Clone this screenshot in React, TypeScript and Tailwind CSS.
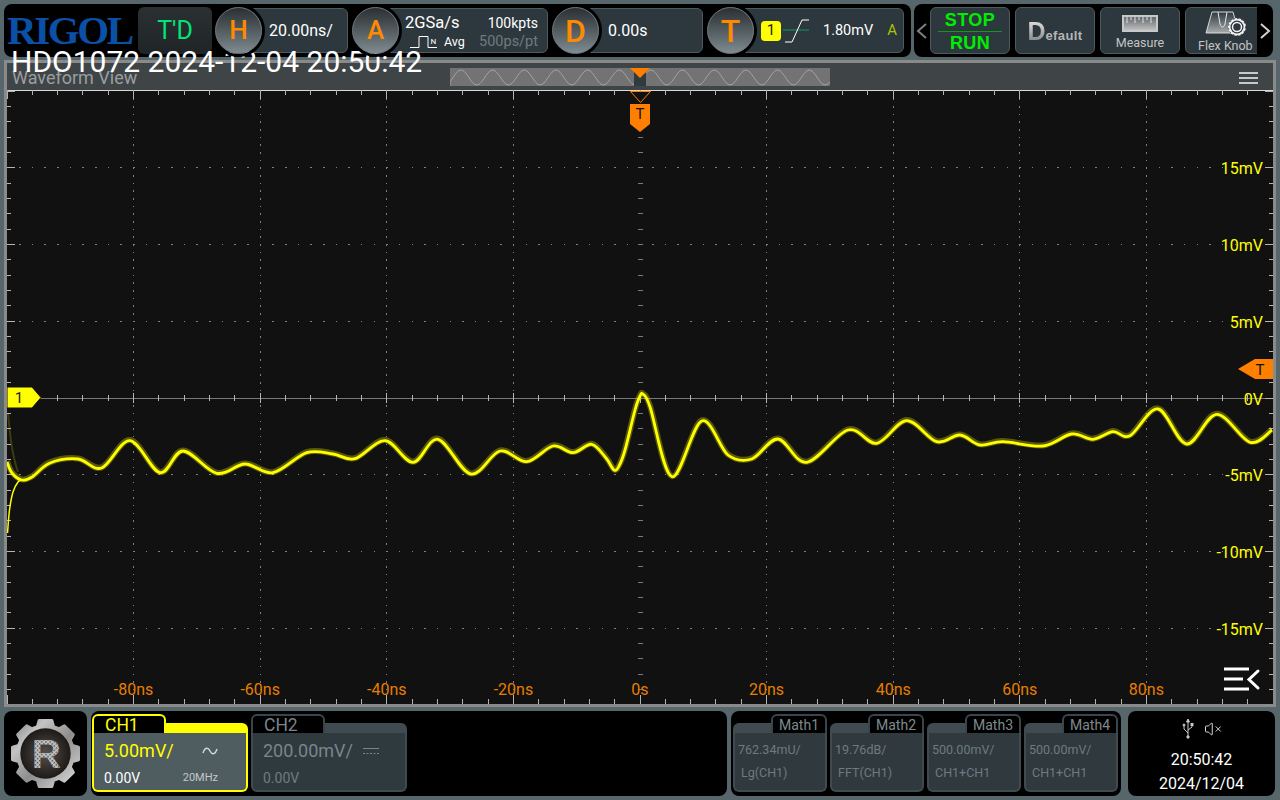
import React from 'react';
import { VolumeX } from 'lucide-react';

// trace points read off the screen, in page pixels
const trace: [number, number][] = [
  [7, 462], [12, 473], [21.7, 480], [32, 477], [50, 463], [78, 459], [101.7, 468], [130, 440.7], [160, 472.7], [183, 451],
  [216.7, 473.3], [245, 464], [273, 472.7], [306.7, 452.7], [333, 454], [355, 458.7], [385, 440.7], [413, 462.3],
  [438, 439.3], [470.7, 474], [500, 451], [526.7, 461.7], [553, 446], [573, 452.7], [591.7, 444.3], [606, 458], [614, 470],
  [619, 466], [625, 450], [635, 410], [640, 396], [643, 394.3], [650, 406.7], [672, 476.7], [701.7, 421], [728, 455],
  [751.7, 459], [778, 439], [806.7, 462.3], [848, 430], [876.7, 443.3], [906.7, 420.7], [936.7, 441.7], [960, 435],
  [980, 445], [1003, 441.7], [1043, 446], [1071.7, 434], [1093, 439.3], [1113, 431.7], [1130, 435.7], [1158, 409],
  [1186.7, 444], [1216.7, 414.3], [1250, 442.3], [1272, 430],
];
const riseTrace: [number, number][] = [[22, 480], [18, 482], [13, 492], [9.5, 510], [7.5, 533]];

const smooth = (pts: [number, number][]) => {
  let d = `M${pts[0][0]} ${pts[0][1]}`;
  for (let i = 0; i < pts.length - 1; i++) {
    const p0 = pts[Math.max(i - 1, 0)];
    const p1 = pts[i];
    const p2 = pts[i + 1];
    const p3 = pts[Math.min(i + 2, pts.length - 1)];
    d += `C${p1[0] + (p2[0] - p0[0]) / 6} ${p1[1] + (p2[1] - p0[1]) / 6} ${p2[0] - (p3[0] - p1[0]) / 6} ${p2[1] - (p3[1] - p1[1]) / 6} ${p2[0]} ${p2[1]}`;
  }
  return d;
};

const range = (from: number, to: number) => Array.from({ length: to - from + 1 }, (_, i) => from + i);

const CX = 640;
const CY = 398;
const DX = 126.6;
const DY = 76.7;

const timeLabels = [-80, -60, -40, -20, 0, 20, 40, 60, 80];
const voltLabels = [15, 10, 5, 0, -5, -10, -15];

const Plot = () => (
  <svg viewBox="7 90 1266 614" className="block h-[614px] w-[1266px] bg-[#111111]" fontFamily="Roboto, sans-serif">
    {/* dotted grid */}
    <g fill="#808080" shapeRendering="crispEdges">
      {[-4, -3, -2, -1, 1, 2, 3, 4].map((k) =>
        range(-40, 40).map((j) => (
          <rect key={`v${k}${j}`} x={CX + k * DX - 0.5} y={CY + (j * DY) / 10 - 0.5} width="1" height="1.5" />
        ))
      )}
      {[-3, -2, -1, 1, 2, 3].map((k) =>
        range(-50, 50).map((j) => (
          <rect key={`h${k}${j}`} x={CX + (j * DX) / 10 - 0.5} y={CY + k * DY - 0.5} width="1.5" height="1" />
        ))
      )}
    </g>
    {/* axes and edge ticks */}
    <g stroke="#b4b4b4" strokeWidth="1" shapeRendering="crispEdges">
      <line x1="7" x2="1273" y1="398" y2="398" stroke="#777777" />
      <line x1="7" x2="1273" y1="90.5" y2="90.5" stroke="#d8d8d8" />
      {range(-25, 25).map((i) => {
        const x = CX + (i * DX) / 5;
        const major = i % 5 === 0;
        return (
          <g key={i}>
            <line x1={x} x2={x} y1="90" y2={major ? 99 : 95} />
            <line x1={x} x2={x} y1={major ? 695 : 699} y2="704" />
            <line x1={x} x2={x} y1={major ? 393 : 395} y2={major ? 403 : 401} />
          </g>
        );
      })}
      {range(-20, 20).map((i) => {
        const y = CY + (i * DY) / 5;
        const major = i % 5 === 0;
        return (
          <g key={i}>
            <line x1="7" x2={major ? 15 : 11} y1={y} y2={y} />
            <line x1={major ? 1265 : 1269} x2="1273" y1={y} y2={y} />
            <line x1="637.5" x2="642.5" y1={y} y2={y} stroke="#7a7a7a" />
          </g>
        );
      })}
    </g>
    {/* trace with its persistence */}
    <path d={smooth(trace)} fill="none" stroke="#ffff00" strokeOpacity="0.3" strokeWidth="6" transform="translate(0 -0.6)" />
    <path d="M8 413C10 435 12 455 18 472" fill="none" stroke="#ffff00" strokeOpacity="0.18" strokeWidth="2" />
    <path d={smooth(riseTrace)} fill="none" stroke="#ffff00" strokeWidth="1.5" />
    <path d={smooth(trace)} fill="none" stroke="#ffff00" strokeWidth="2.8" />
    {/* axis labels */}
    <g fill="#e67e00" fontSize="16" textAnchor="middle">
      {timeLabels.map((t) => (
        <text key={t} x={CX + (t / 20) * DX} y="695">{t}{t === 0 ? 's' : 'ns'}</text>
      ))}
    </g>
    <g fill="#ffff00" fontSize="16" textAnchor="end">
      {voltLabels.map((v) => (
        <text key={v} x="1263" y={CY - (v / 5) * DY + 6.5}>{v}{v === 0 ? 'V' : 'mV'}</text>
      ))}
    </g>
    {/* trigger markers */}
    <path d="M630.5 91.5H650.5L640.5 102.5Z" fill="#111111" stroke="#ff8000" strokeWidth="1" />
    <path d="M630 104H650V124L640 132L630 124Z" fill="#ff8000" />
    <text x="640" y="119" fontSize="15" textAnchor="middle" fill="#111111">T</text>
    <path d="M1238 369L1255 359H1273V379H1255Z" fill="#ff8000" />
    <text x="1260" y="375" fontSize="15" textAnchor="middle" fill="#111111">T</text>
    {/* channel 1 ground marker */}
    <path d="M7 387H32L41 397.5L32 408H7Z" fill="#ffff00" stroke="#111111" strokeWidth="1" />
    <text x="19" y="403" fontSize="15" textAnchor="middle" fill="#222222">1</text>
    {/* touch menu */}
    <g stroke="#ffffff" strokeWidth="3" fill="none">
      <path d="M1224 669H1249M1224 679H1243M1224 689H1249" />
      <path d="M1258 671L1249 679.5L1258 688" strokeLinecap="round" />
    </g>
  </svg>
);

const Knob = ({ letter, className }: { letter: string; className: string }) => (
  <div className={`z-10 flex h-[47px] w-[47px] shrink-0 items-center justify-center rounded-full border border-[#6f7b80] bg-gradient-to-b from-[#2b3033] to-[#7f8c91] text-[#ff8a00] shadow-[0_0_0_3px_#000000] ${className}`}>
    {letter}
  </div>
);

const Readout = ({ className, children }: { className: string; children: React.ReactNode }) => (
  <div className={`-ml-[9px] h-[45px] rounded-r-md border border-[#4d5a60] bg-[#2d383e] text-white ${className}`}>
    {children}
  </div>
);

const MiniMap = () => {
  let d = 'M450 86';
  for (let x = 0; x <= 380; x += 2) {
    d += `L${450 + x} ${77.5 - 7.5 * Math.sin((x / 380) * 12 * 2 * Math.PI - 0.6)}`;
  }
  return (
    <svg viewBox="450 68 380 18" className="h-[18px] w-[380px] bg-[#737373]">
      <path d={d} fill="none" stroke="#a3a3a3" strokeWidth="1" />
      <rect x="634" y="72" width="12" height="14" fill="#2d3a40" />
      <path d="M630 68H650L640 78Z" fill="#ff8000" />
    </svg>
  );
};

const TopBar = () => (
  <div className="flex gap-[3px] pl-[4px]">
    <div className="flex h-[53px] w-[907px] items-center rounded-lg bg-black pl-[3px]">
      <div className="w-[131px] font-['Liberation_Serif',serif] text-[41px] leading-none font-bold tracking-[-2.4px] text-[#0a50a6]">
        RIGOL
      </div>
      <div className="flex h-[47px] w-[74px] items-center justify-center rounded-md bg-gradient-to-b from-[#2b3033] to-[#1f2426] text-[25px] text-[#00e676]">
        T'D
      </div>
      <div className="ml-[3px] flex w-[133px] items-center">
        <Knob letter="H" className="text-[26px] font-medium" />
        <Readout className="flex flex-1 items-center pl-[15px] text-[16px]">20.00ns/</Readout>
      </div>
      <div className="ml-[4px] flex w-[196px] items-center">
        <Knob letter="A" className="text-[26px] font-medium" />
        <Readout className="flex flex-1 flex-col justify-center pr-[9px] pl-[14px]">
          <div className="flex items-center justify-between pt-[3px] leading-[20px]">
            <span className="text-[16.5px]">2GSa/s</span>
            <span className="text-[14px]">100kpts</span>
          </div>
          <div className="flex items-center justify-between leading-[18px]">
            <span className="flex items-center text-[12.5px]">
              <svg width="39" height="14" viewBox="0 0 39 14" fill="none" stroke="#ffffff" strokeWidth="1">
                <path d="M5 12.5H14V1.5H23V12.5H32" />
                <text x="25.5" y="9" fontSize="8" fill="#ffffff" stroke="none" fontFamily="Roboto, sans-serif">N</text>
              </svg>
              <span>Avg</span>
            </span>
            <span className="text-[14.5px] text-[#6f7a80]">500ps/pt</span>
          </div>
        </Readout>
      </div>
      <div className="ml-[4px] flex w-[151px] items-center">
        <Knob letter="D" className="text-[32px] font-medium" />
        <Readout className="flex flex-1 items-center pl-[17px] text-[16px]">0.00s</Readout>
      </div>
      <div className="ml-[4px] flex w-[197px] items-center">
        <Knob letter="T" className="text-[32px] font-medium" />
        <Readout className="flex flex-1 items-center pr-[4px] pl-[15px]">
          <span className="flex h-[20px] w-[20px] items-center justify-center rounded-[4px] bg-[#ffff00] text-[15px] text-[#222222]">1</span>
          <svg width="28" height="28" viewBox="0 0 28 28" fill="none" className="ml-[2px]">
            <path d="M0 13H26" stroke="#0f9a5c" strokeWidth="1" />
            <path d="M2 25H9L19 3H26" stroke="#ffffff" strokeWidth="1" />
          </svg>
          <span className="ml-[12px] text-[14.5px]">1.80mV</span>
          <span className="ml-auto pr-[2px] text-[15px] text-[#a8c400]">A</span>
        </Readout>
      </div>
    </div>
    <div className="flex h-[53px] w-[359px] items-center rounded-lg bg-black">
      <svg width="16" height="20" viewBox="0 0 16 20" fill="none" stroke="#7b8084" strokeWidth="2" className="shrink-0">
        <path d="M12 3L4 10L12 17" />
      </svg>
      <div className="flex w-[327px] gap-[5px] overflow-hidden">
        <div className="flex h-[47px] w-[80px] shrink-0 flex-col items-center justify-center rounded-md border border-[#4d5a60] bg-[#2d383e] pt-[2px] font-['Liberation_Sans',sans-serif] text-[18px] leading-[20px] font-bold tracking-[0.4px] text-[#00ee00]">
          <span>STOP</span>
          <span className="my-[1px] h-px w-[64px] bg-[#129a12]"></span>
          <span>RUN</span>
        </div>
        <div className="flex h-[47px] w-[80px] shrink-0 items-end justify-center rounded-md border border-[#4d5a60] bg-[#2d383e] pb-[9px] font-['Liberation_Sans',sans-serif] font-bold">
          <span className="bg-gradient-to-b from-[#e8e8e8] to-[#7d7d7d] bg-clip-text text-[25px] leading-[25px] text-transparent">D</span>
          <span className="text-[13px] leading-[17px] tracking-[0.4px] text-[#b4b4b4]">efault</span>
        </div>
        <div className="flex h-[47px] w-[80px] shrink-0 flex-col items-center rounded-md border border-[#4d5a60] bg-[#2d383e] pt-[7px] text-[12.5px] text-[#c4c4c4]">
          <svg width="36" height="17" viewBox="0 0 36 17" fill="none" stroke="#e0e0e0" strokeWidth="1">
            <defs>
              <linearGradient id="rule" x1="0" y1="0" x2="0" y2="1">
                <stop offset="0" stopColor="#5d6468" />
                <stop offset="1" stopColor="#c4c4c4" />
              </linearGradient>
            </defs>
            <rect x="1" y="1" width="34" height="15" fill="url(#rule)" stroke="#c8c8c8" strokeWidth="2" />
            <path d="M5 2V8M9 2V5M13 2V8M17 2V5M21 2V8M25 2V5M29 2V8" />
          </svg>
          <span className="mt-[3px] leading-[15px]">Measure</span>
        </div>
        <div className="flex h-[47px] w-[80px] shrink-0 flex-col items-start rounded-md border border-[#4d5a60] bg-[#2d383e] pt-[3px] pl-[12px] text-[12.5px] text-[#c4c4c4]">
          <svg width="44" height="25" viewBox="0 0 44 25" fill="none" className="ml-[7px]">
            <defs>
              <linearGradient id="band" x1="0" y1="0" x2="0" y2="1">
                <stop offset="0" stopColor="#2d383e" />
                <stop offset="1" stopColor="#a8acae" />
              </linearGradient>
            </defs>
            <path d="M1 22L7 1H28L34 22Z" fill="url(#band)" stroke="#d8d8d8" strokeWidth="1" />
            <path d="M13 1L15 13C16 17 19 17 20 13L22 1" stroke="#e8e8e8" strokeWidth="1" />
            <circle cx="32" cy="16" r="9" fill="#f2f2f2" />
            <circle cx="32" cy="16" r="6.5" fill="#2d383e" />
            <circle cx="32" cy="16" r="4.5" fill="none" stroke="#f2f2f2" strokeWidth="1.5" />
            <circle cx="32" cy="16" r="8.5" fill="none" stroke="#2d383e" strokeWidth="1" strokeDasharray="1.5 2.5" />
          </svg>
          <span className="mt-[2px] leading-[15px] whitespace-nowrap">Flex Knob</span>
        </div>
      </div>
      <svg width="16" height="20" viewBox="0 0 16 20" fill="none" stroke="#d0d0d0" strokeWidth="2" className="shrink-0">
        <path d="M4 3L12 10L4 17" />
      </svg>
    </div>
  </div>
);

const Scope = () => (
  <div className="mt-[3px] ml-[4px] w-[1272px] border-[3px] border-[#8a8a8a]">
    <div className="flex h-[27px] items-center bg-[#3f4547]">
      <div className="w-[443px] pt-[3px] pl-[5px] text-[18px] leading-[24px] text-[#9a9ea0]">Waveform View</div>
      <MiniMap />
      <div className="mt-[3px] mr-[15px] ml-auto flex w-[19px] flex-col gap-[3px]">
        <span className="h-[2px] bg-[#c8c8c8]"></span>
        <span className="h-[2px] bg-[#c8c8c8]"></span>
        <span className="h-[2px] bg-[#c8c8c8]"></span>
      </div>
    </div>
    <Plot />
  </div>
);

const Gear = () => {
  const outer: string[] = [];
  for (let i = 0; i < 8; i++) {
    const a = (i * Math.PI) / 4;
    [[-0.29, 28.5], [-0.19, 34], [0.19, 34], [0.29, 28.5]].forEach(([da, r]) => {
      outer.push(`${42 + r * Math.cos(a + da)},${42.5 + r * Math.sin(a + da)}`);
    });
  }
  return (
    <svg width="83" height="85" viewBox="0 0 84 85">
      <defs>
        <linearGradient id="silver" x1="0" y1="0" x2="1" y2="1">
          <stop offset="0" stopColor="#7c7c7c" />
          <stop offset="0.25" stopColor="#c4c4c4" />
          <stop offset="0.55" stopColor="#8d8d8d" />
          <stop offset="1" stopColor="#e0e0e0" />
        </linearGradient>
        <radialGradient id="hub">
          <stop offset="0" stopColor="#57504c" />
          <stop offset="1" stopColor="#1d1a18" />
        </radialGradient>
        <pattern id="mesh" width="3" height="3" patternUnits="userSpaceOnUse" patternTransform="rotate(45)">
          <rect width="3" height="3" fill="#c4c4c4" />
          <rect width="1.5" height="1.5" fill="#4a4a4a" />
        </pattern>
      </defs>
      <polygon points={outer.join(' ')} fill="url(#silver)" stroke="url(#silver)" strokeLinejoin="round" strokeWidth="3" />
      <circle cx="42" cy="42.5" r="25.5" fill="url(#hub)" />
      <text x="43" y="57" textAnchor="middle" fontFamily="Liberation Sans, sans-serif" fontWeight="700" fontSize="41" fill="url(#mesh)">R</text>
    </svg>
  );
};

const Channel = ({ active, name, scale, offset, icon, bandwidth }: {
  active: boolean;
  name: string;
  scale: string;
  offset: string;
  icon: React.ReactNode;
  bandwidth?: string;
}) => (
  <div className="flex h-[78px] w-[156px] flex-col">
    <div className="flex h-[19px]">
      <div className={`w-[74px] rounded-t-md border-x-2 border-t-2 bg-black pl-[11px] text-[17.5px] leading-[18px] ${active ? 'border-[#ffff00] text-[#ffff00]' : 'border-[#39454a] text-[#7a858a]'}`}>
        {name}
      </div>
      <div className={`mt-[9px] flex-1 rounded-tr-md ${active ? 'bg-[#ffff00]' : 'bg-[#3f4b50]'}`}></div>
    </div>
    <div className={`flex flex-1 flex-col rounded-b-md border-2 border-t-0 px-[10px] ${active ? 'border-[#ffff00] bg-[#4f5c60]' : 'border-[#3f4b50] bg-[#2f3a3f]'}`}>
      <div className={`flex h-[35px] items-center text-[18px] ${active ? 'text-[#ffff00]' : 'text-[#7a858a]'}`}>
        <span className="w-[98px] whitespace-nowrap">{scale}</span>
        {icon}
      </div>
      <div className="flex items-center justify-between pr-[18px]">
        <span className={`text-[14px] ${active ? 'text-white' : 'text-[#6f7a80]'}`}>{offset}</span>
        {bandwidth && <span className="text-[11px] text-[#c4c8ca]">{bandwidth}</span>}
      </div>
    </div>
  </div>
);

const maths = [
  { name: 'Math1', scale: '762.34mU/', source: 'Lg(CH1)' },
  { name: 'Math2', scale: '19.76dB/', source: 'FFT(CH1)' },
  { name: 'Math3', scale: '500.00mV/', source: 'CH1+CH1' },
  { name: 'Math4', scale: '500.00mV/', source: 'CH1+CH1' },
];

const MathCard = ({ name, scale, source }: { name: string; scale: string; source: string }) => (
  <div className="flex h-[78px] w-[94px] flex-col">
    <div className="flex h-[19px]">
      <div className="mt-[9px] flex-1 rounded-tl-md bg-[#3f4b50]"></div>
      <div className="w-[56px] rounded-t-md border-x-2 border-t-2 border-[#39454a] bg-black text-center text-[14px] leading-[18px] text-[#7f8a8f]">
        {name}
      </div>
    </div>
    <div className="flex flex-1 flex-col rounded-b-md border-2 border-t-0 border-[#3f4b50] bg-[#2f393e] pl-[3px] text-[#6f7a80]">
      <div className="pt-[5px] text-[12.5px] leading-[23px] whitespace-nowrap">{scale}</div>
      <div className="pl-[3px] text-[12.5px] leading-[23px] whitespace-nowrap">{source}</div>
    </div>
  </div>
);

const BottomBar = () => (
  <div className="mt-[4px] flex h-[85px] pl-[4px]">
    <div className="w-[83px] rounded-lg bg-black">
      <Gear />
    </div>
    <div className="ml-[4px] flex w-[636px] gap-[3px] rounded-lg bg-black pt-[3px] pl-[1px]">
      <Channel
        active
        name="CH1"
        scale="5.00mV/"
        offset="0.00V"
        bandwidth="20MHz"
        icon={
          <svg width="16" height="10" viewBox="0 0 16 10" fill="none" stroke="#d0d4d6" strokeWidth="1.5">
            <path d="M1 7C3 1 6 1 8 5C10 9 13 9 15 3" />
          </svg>
        }
      />
      <Channel
        active={false}
        name="CH2"
        scale="200.00mV/"
        offset="0.00V"
        icon={
          <svg width="16" height="8" viewBox="0 0 16 8" fill="none" stroke="#7a858a" strokeWidth="1" className="ml-[2px]">
            <path d="M0 1.5H16" />
            <path d="M0 6.5H16" strokeDasharray="2 1.5" />
          </svg>
        }
      />
    </div>
    <div className="ml-[4px] flex w-[390px] gap-[3px] rounded-lg bg-black pt-[3px] pl-[2px]">
      {maths.map((m) => (
        <MathCard key={m.name} {...m} />
      ))}
    </div>
    <div className="ml-[7px] flex w-[147px] flex-col items-center rounded-lg bg-black pt-[7px] text-white">
      <div className="flex h-[22px] items-center gap-[10px] text-[#dcdcdc]">
        <svg width="12" height="20" viewBox="0 0 12 20" fill="none" stroke="#c8c8c8" strokeWidth="1">
          <path d="M6 1V18M6 14L2 10V7M6 11L10 8V6" />
          <path d="M6 0L4.5 3H7.5Z" fill="#c8c8c8" />
          <circle cx="6" cy="18" r="1.2" fill="#c8c8c8" />
          <rect x="9" y="4.5" width="2" height="2" fill="#c8c8c8" />
          <circle cx="2" cy="6" r="1" fill="#c8c8c8" />
        </svg>
        <VolumeX size={18} strokeWidth={1.3} />
      </div>
      <div className="mt-[8px] text-[16px] leading-[24px]">20:50:42</div>
      <div className="text-[16px] leading-[24px]">2024/12/04</div>
    </div>
  </div>
);

export default function App() {
  return (
    <div className="relative h-[800px] w-[1280px] overflow-hidden bg-[#56666a] pt-[4px] font-[Roboto,sans-serif]">
      <TopBar />
      <Scope />
      <BottomBar />
      {/* file stamp burnt over the screen */}
      <div className="absolute top-[44px] left-[11px] text-[30px] leading-[36px] whitespace-nowrap text-white">
        HDO1072 2024-12-04 20:50:42
      </div>
    </div>
  );
}
